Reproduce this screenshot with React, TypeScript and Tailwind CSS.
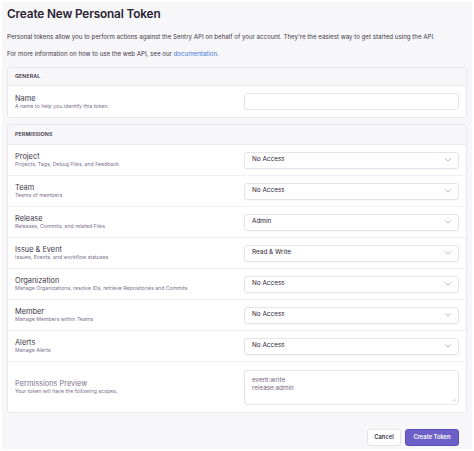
import React from "react";

const rows = [
  { label: "Project", help: "Projects, Tags, Debug Files, and Feedback", value: "No Access" },
  { label: "Team", help: "Teams of members", value: "No Access" },
  { label: "Release", help: "Releases, Commits, and related Files", value: "Admin" },
  { label: "Issue & Event", help: "Issues, Events, and workflow statuses", value: "Read & Write" },
  { label: "Organization", help: "Manage Organizations, resolve IDs, retrieve Repositories and Commits", value: "No Access" },
  { label: "Member", help: "Manage Members within Teams", value: "No Access" },
  { label: "Alerts", help: "Manage Alerts", value: "No Access" },
];

function Chevron() {
  return (
    <svg width="6" height="4" viewBox="0 0 6 4" fill="none" className="shrink-0">
      <path d="M0.6 0.8 L3 3.1 L5.4 0.8" stroke="#9a93a6" strokeWidth="0.7" strokeLinecap="round" strokeLinejoin="round" />
    </svg>
  );
}

export default function App() {
  return (
    <div
      className="w-[474px] h-[451px] bg-white p-[2px] overflow-hidden"
      style={{ fontFamily: "Inter, 'Noto Sans', sans-serif" }}
    >
      <div className="h-full bg-[#f7f7f9] px-[5px] pt-[5px] flex flex-col">
        <h1 className="text-[11.8px] leading-[14px] font-semibold text-[#2b2233] tracking-[-0.15px]">
          Create New Personal Token
        </h1>
        <p className="text-[6.15px] leading-[8px] text-[#3e3446] mt-[12px]">
          Personal tokens allow you to perform actions against the Sentry API on behalf of your account. They're the easiest way to get started using the API.
        </p>
        <p className="text-[6.15px] leading-[8px] text-[#3e3446] mt-[9px]">
          For more information on how to use the web API, see our <span className="text-[#3d74db]">documentation</span>.
        </p>

        {/* General */}
        <div className="mt-[9px] border border-[#ebe8ef] rounded-[3px] bg-white overflow-hidden">
          <div className="h-[18px] bg-[#f7f7f9] border-b border-[#ebe8ef] flex items-center px-[7px]">
            <span className="text-[5.3px] font-semibold text-[#3e3446] uppercase tracking-[0.1px]">General</span>
          </div>
          <div className="h-[31px] flex items-center px-[7px]">
            <div className="flex-1">
              <div className="text-[7.4px] leading-[9px] text-[#3e3446]">Name</div>
              <div className="text-[5.2px] leading-[7px] text-[#80708f]">A name to help you identify this token.</div>
            </div>
            <div className="w-[215px] h-[17px] border border-[#e6e3ea] rounded-[3px] bg-white" />
          </div>
        </div>

        {/* Permissions */}
        <div className="mt-[6px] border border-[#ebe8ef] rounded-[3px] bg-white overflow-hidden">
          <div className="h-[20px] bg-[#f7f7f9] border-b border-[#ebe8ef] flex items-center px-[7px]">
            <span className="text-[5.3px] font-semibold text-[#3e3446] uppercase tracking-[0.1px]">Permissions</span>
          </div>
          {rows.map((r) => (
            <div key={r.label} className="h-[31px] flex items-center px-[7px] border-b border-[#f2f0f4]">
              <div className="flex-1">
                <div className="text-[7.4px] leading-[9px] text-[#3e3446]">{r.label}</div>
                <div className="text-[5.2px] leading-[7px] text-[#80708f]">{r.help}</div>
              </div>
              <div className="w-[215px] h-[17px] border border-[#e6e3ea] rounded-[3px] bg-white flex items-center justify-between pl-[7px] pr-[7px] shadow-[0_1px_1px_rgba(0,0,0,0.03)]">
                <span className="text-[6.4px] text-[#2b2233]">{r.value}</span>
                <Chevron />
              </div>
            </div>
          ))}
          <div className="h-[50px] flex items-center px-[7px]">
            <div className="flex-1">
              <div className="text-[7.4px] leading-[9px] text-[#80708f]">Permissions Preview</div>
              <div className="text-[5.2px] leading-[7px] text-[#80708f]">Your token will have the following scopes.</div>
            </div>
            <div className="relative w-[215px] h-[35px] border border-[#e6e3ea] rounded-[3px] bg-white px-[7px] pt-[5px]">
              <div className="text-[6.3px] leading-[8px] text-[#71637e]">event:write</div>
              <div className="text-[6.3px] leading-[8px] text-[#71637e]">release:admin</div>
              <svg className="absolute right-[2px] bottom-[2px]" width="4" height="4" viewBox="0 0 4 4">
                <path d="M3.5 0.8 L0.8 3.5 M3.5 2.2 L2.2 3.5" stroke="#aaa" strokeWidth="0.5" />
              </svg>
            </div>
          </div>
        </div>

        {/* Footer */}
        <div className="mt-[16px] flex justify-end gap-[4px] pr-[8px]">
          <button className="h-[17px] w-[34px] rounded-[3px] border border-[#e6e3ea] bg-white text-[5.8px] font-semibold text-[#3e3446]">
            Cancel
          </button>
          <button className="h-[17px] w-[54px] rounded-[3px] bg-[#6c5fc7] border border-[#5b4cc0] text-[5.8px] font-semibold text-white">
            Create Token
          </button>
        </div>
      </div>
    </div>
  );
}
